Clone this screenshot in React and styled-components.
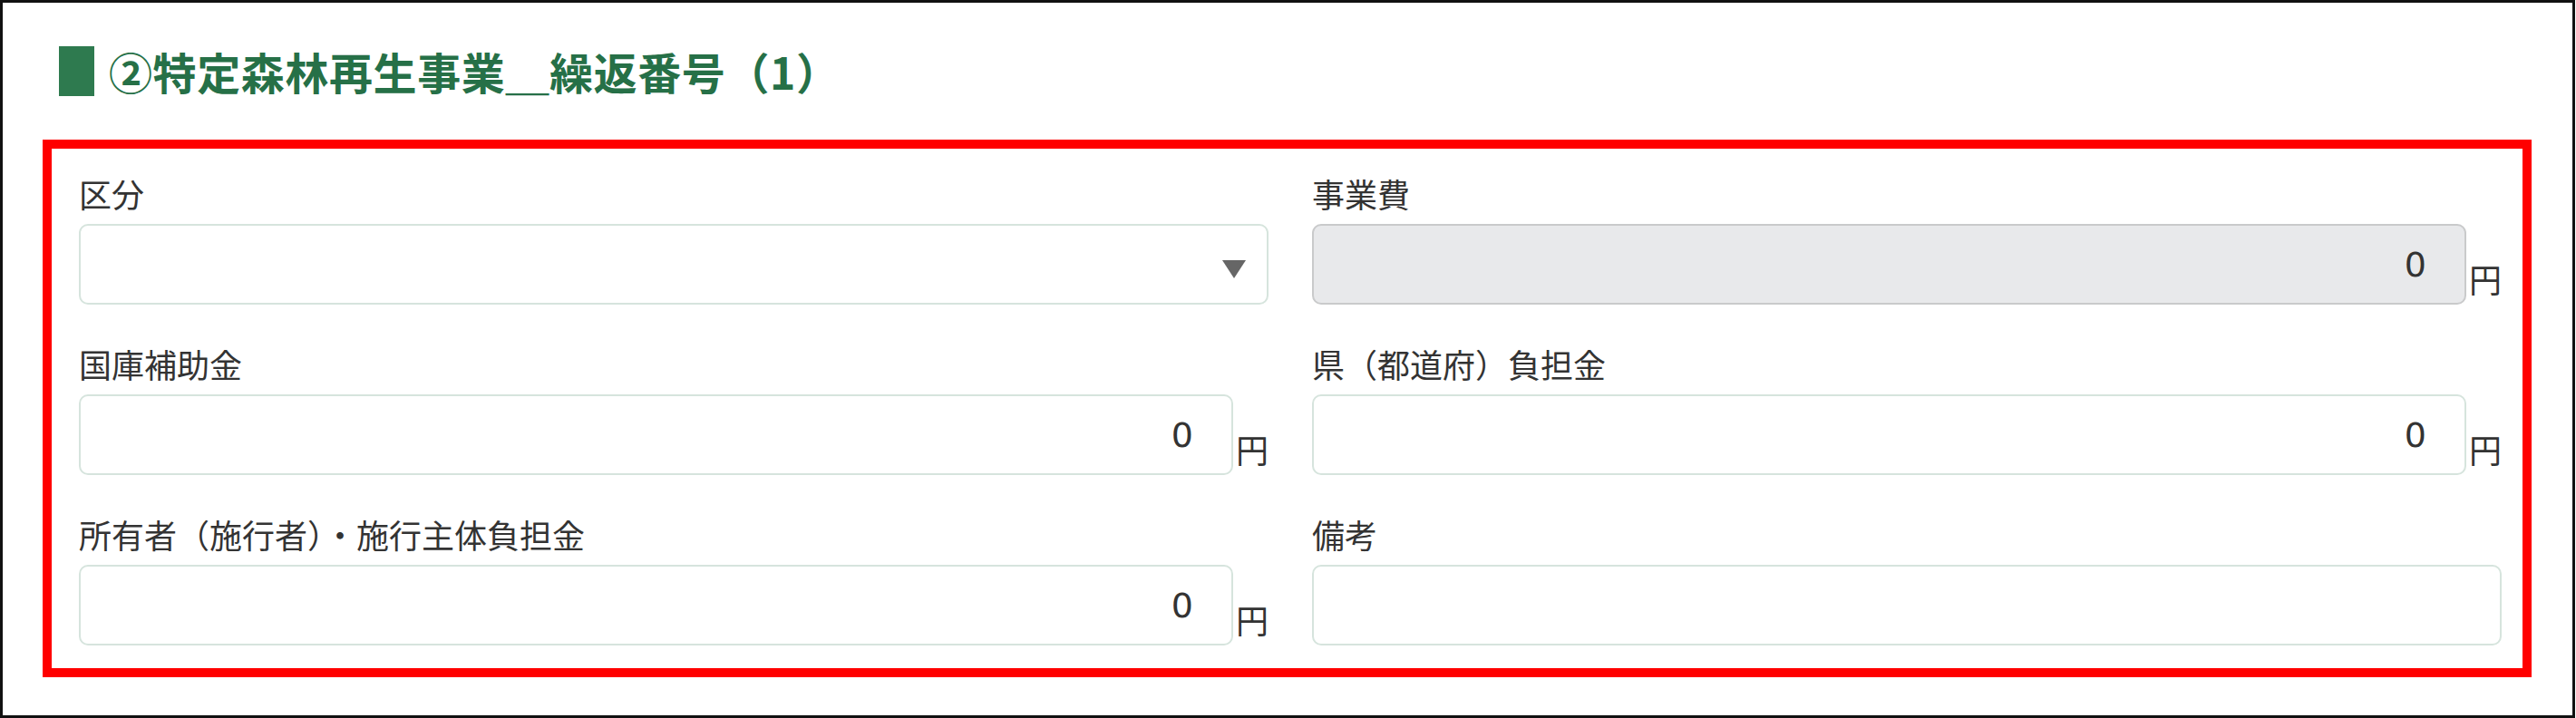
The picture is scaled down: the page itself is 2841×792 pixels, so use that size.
import React from "react";
import styled, { createGlobalStyle } from "styled-components";

const Global = createGlobalStyle`
  html, body { margin: 0; padding: 0; background: #fff; }
  body { font-family: "Noto Sans CJK JP", "Noto Sans", sans-serif; }
`;

const Frame = styled.div`
  box-sizing: border-box;
  width: 2840px;
  height: 792px;
  border: 3px solid #111;
  padding: 48px 0 0 44px;
`;

const Header = styled.div`
  display: flex;
  align-items: center;
  gap: 16px;
  height: 55px;
  padding-left: 18px;
`;

const Bar = styled.span`
  width: 39px;
  height: 55px;
  background: #2e7a4f;
`;

const Title = styled.h2`
  margin: 0;
  font-size: 48px;
  line-height: 55px;
  font-weight: 700;
  letter-spacing: 0.6px;
  color: #267047;
  font-family: "Noto Sans CJK JP", sans-serif;
`;

const Highlight = styled.section`
  box-sizing: border-box;
  width: 2745px;
  height: 593px;
  margin-top: 48px;
  border: 10px solid #ff0000;
  padding: 22px 23px 25px 30px;
`;

const Grid = styled.div`
  display: grid;
  grid-template-columns: 1fr 1fr;
  column-gap: 48px;
  row-gap: 38px;
`;

const Field = styled.div`
  display: flex;
  flex-direction: column;
  min-width: 0;
`;

const Label = styled.label`
  font-size: 36px;
  line-height: 54px;
  color: #333;
  margin-bottom: 7px;
  white-space: nowrap;
`;

const Row = styled.div`
  display: flex;
  align-items: flex-end;
  gap: 3px;
`;

const Input = styled.input`
  box-sizing: border-box;
  flex: 1;
  min-width: 0;
  height: 89px;
  margin: 0;
  border: 2px solid ${(p) => (p.disabled ? "#c9cacb" : "#d6e4dd")};
  border-radius: 10px;
  background: ${(p) => (p.disabled ? "#e8e9eb" : "#fff")};
  padding: 0 42px 0 16px;
  text-align: right;
  font-family: "DejaVu Sans", "Noto Sans CJK JP", sans-serif;
  font-size: 38px;
  color: #333;
  outline: none;
  -webkit-text-fill-color: #333;
  opacity: 1;
`;

const SelectBox = styled.div`
  box-sizing: border-box;
  flex: 1;
  height: 89px;
  border: 2px solid #d6e4dd;
  border-radius: 10px;
  background: #fff;
  display: flex;
  align-items: center;
  justify-content: flex-end;
  padding: 10px 23px 0 0;
`;

const Yen = styled.span`
  font-size: 36px;
  line-height: 54px;
  color: #333;
  margin-bottom: 2px;
`;

const Arrow = () => (
  <svg width="26" height="20" viewBox="0 0 26 20">
    <polygon points="0,0 26,0 13,20" fill="#666" />
  </svg>
);

const MoneyField = ({ label, disabled }) => (
  <Field>
    <Label>{label}</Label>
    <Row>
      <Input value="0" readOnly disabled={disabled} />
      <Yen>円</Yen>
    </Row>
  </Field>
);

export default function App() {
  return (
    <>
      <Global />
      <Frame>
        <Header>
          <Bar />
          <Title>②特定森林再生事業＿繰返番号（1）</Title>
        </Header>
        <Highlight>
          <Grid>
            <Field>
              <Label>区分</Label>
              <Row>
                <SelectBox>
                  <Arrow />
                </SelectBox>
              </Row>
            </Field>
            <MoneyField label="事業費" disabled />
            <MoneyField label="国庫補助金" />
            <MoneyField label="県（都道府）負担金" />
            <MoneyField label="所有者（施行者）・施行主体負担金" />
            <Field>
              <Label>備考</Label>
              <Row>
                <Input readOnly defaultValue="" />
              </Row>
            </Field>
          </Grid>
        </Highlight>
      </Frame>
    </>
  );
}
